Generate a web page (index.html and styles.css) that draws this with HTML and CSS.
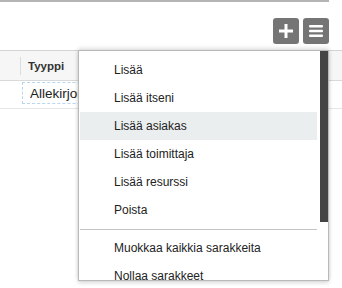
FILE: index.html
```html
<!DOCTYPE html>
<html lang="fi">
<head>
    <meta charset="UTF-8">
    <meta name="viewport" content="width=device-width, initial-scale=1.0">
    <title>Sarakkeet</title>
    <link rel="stylesheet" href="styles.css">
</head>
<body>
    <div class="top-rule"></div>

    <div class="toolbar">
        <button class="tool-btn" title="Lisää">
            <svg width="16" height="16" viewBox="0 0 16 16">
                <rect x="6.5" y="1" width="3" height="14" fill="#fff"/>
                <rect x="1" y="6.5" width="14" height="3" fill="#fff"/>
            </svg>
        </button>
        <button class="tool-btn" title="Valikko">
            <svg width="16" height="16" viewBox="0 0 16 16">
                <rect x="1" y="2" width="14" height="2.6" rx="1" fill="#fff"/>
                <rect x="1" y="6.7" width="14" height="2.6" rx="1" fill="#fff"/>
                <rect x="1" y="11.4" width="14" height="2.6" rx="1" fill="#fff"/>
            </svg>
        </button>
    </div>

    <div class="grid-wrap">
        <div class="grid">
            <div class="grid-head">
                <div class="col-sep"></div>
                <div class="head-cell">Tyyppi</div>
            </div>
            <div class="grid-row">
                <div class="cell focused">Allekirjoitus</div>
            </div>
        </div>

        <div class="menu">
            <ul class="menu-list">
                <li class="menu-item">Lisää</li>
                <li class="menu-item">Lisää itseni</li>
                <li class="menu-item hover">Lisää asiakas</li>
                <li class="menu-item">Lisää toimittaja</li>
                <li class="menu-item">Lisää resurssi</li>
                <li class="menu-item">Poista</li>
                <li class="menu-sep"></li>
                <li class="menu-item">Muokkaa kaikkia sarakkeita</li>
                <li class="menu-item">Nollaa sarakkeet</li>
            </ul>
            <div class="scrollbar"><div class="thumb"></div></div>
        </div>
    </div>
</body>
</html>
```

FILE: styles.css
```css
html, body {
    height: 100%;
}

body {
    margin: 0;
    min-height: 288px;
    font-family: "Liberation Sans", Arial, sans-serif;
    font-size: 12px;
    color: #222;
    background: #fff;
}

.top-rule {
    width: 329px;
    height: 2px;
    background-color: #b4b4b4;
}

.toolbar {
    display: flex;
    justify-content: flex-end;
    gap: 4px;
    width: 329px;
    margin-top: 16px;
}

.tool-btn {
    width: 26px;
    height: 26px;
    padding: 0;
    border: none;
    border-radius: 3px;
    background-color: #757575;
    display: flex;
    align-items: center;
    justify-content: center;
}

.grid-wrap {
    position: relative;
    margin-top: 6px;
}

.grid {
    border-top: 1px solid #d4d4d4;
}

.grid-head {
    display: flex;
    align-items: center;
    height: 29px;
    background-color: #f6f6f6;
    border-bottom: 1px solid #d9d9d9;
}

.col-sep {
    width: 1px;
    height: 18px;
    margin-left: 20px;
    background-color: #dcdcdc;
}

.head-cell {
    padding-left: 7px;
    font-size: 11.5px;
    font-weight: bold;
    color: #333;
}

.grid-row {
    height: 26px;
    padding-top: 1px;
    border-bottom: 1px solid #e6e6e6;
}

.cell {
    margin-left: 22px;
    width: 90px;
    height: 20px;
    line-height: 21px;
    padding-left: 7px;
    font-size: 13.5px;
    white-space: nowrap;
    overflow: hidden;
}

.cell.focused {
    border: 1px dashed #b8d6ee;
}

.menu {
    position: absolute;
    top: 0;
    left: 78px;
    width: 249px;
    height: 229px;
    display: flex;
    background: #fff;
    border: 1px solid #b9b9b9;
    box-shadow: 0 -2px 4px rgba(0, 0, 0, 0.12), 0 2px 4px rgba(0, 0, 0, 0.15);
    overflow: hidden;
}

.menu-list {
    flex: 1;
    list-style: none;
    margin: 0 3px 0 0;
    padding: 5px 0 0 1px;
}

.menu-item {
    height: 28px;
    line-height: 28px;
    padding-left: 34px;
    white-space: nowrap;
}

.menu-item.hover {
    background-color: #ebeeee;
}

.menu-sep {
    height: 1px;
    margin: 5px 0 4px 0;
    background-color: #c4c4c4;
}

.scrollbar {
    width: 8px;
    background: #fff;
}

.thumb {
    height: 171px;
    background-color: #444;
}
```
